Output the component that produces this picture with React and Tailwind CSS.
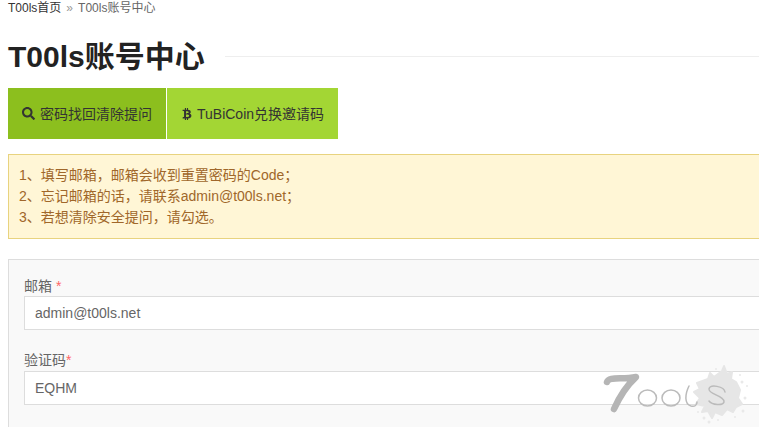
import { FaSearch, FaBtc } from "react-icons/fa";

function Watermark() {
  return (
    <svg className="absolute left-[600px] top-[362px]" width="159" height="65" viewBox="0 0 159 65" fill="none">
      {/* ink splat behind the last letters */}
      <path
        d="M97 21 L108 17 L110 11 L114 15 L122 9 L124 4 L127 12 L132 10 L131 17 L136 20 L140 28 L138 36 L142 42 L136 45 L133 50 L127 47 L122 53 L115 50 L112 56 L108 49 L102 50 L105 44 L96 42 L100 36 L94 30 L100 27 Z"
        fill="#e6e6e6"
        stroke="#e6e6e6"
        strokeWidth="2"
        strokeLinejoin="round"
      />
      <g fill="#e9e9e9">
        <circle cx="142" cy="20" r="1.5" />
        <circle cx="147" cy="24" r="1" />
        <circle cx="140" cy="13" r="1" />
        <circle cx="145" cy="36" r="1.5" />
        <circle cx="143" cy="49" r="1.5" />
        <circle cx="135" cy="55" r="1" />
        <circle cx="104" cy="56" r="1.5" />
        <circle cx="109" cy="60" r="1.5" />
        <circle cx="118" cy="58" r="1" />
        <circle cx="98" cy="50" r="1" />
        <circle cx="116" cy="7" r="1" />
      </g>
      <path d="M7 20 C9 14 22 18 36 15 C25 25 19 36 14 47" stroke="#b5b5b5" strokeWidth="6.5" strokeLinecap="round" strokeLinejoin="round" />
      <g stroke="#bbb" strokeWidth="1.5" strokeLinecap="round">
        <ellipse cx="47.5" cy="36" rx="9" ry="8" />
        <ellipse cx="71" cy="36" rx="9" ry="8" />
        <path d="M89 24 C85 32 84 42 91 44 C95 45 97 43 97 40" />
        <path d="M125 30 C124 24 110 22 109 27 C108 32 125 34 124 40 C123 44 112 43 109 39" />
      </g>
    </svg>
  );
}

export default function App() {
  return (
    <div className="relative h-[427px] w-[759px] overflow-hidden bg-white font-['Liberation_Sans','Noto_Sans_CJK_SC',sans-serif]">
      <div className="w-[1000px] px-2">
        <div className="flex h-[15px] items-center gap-[5px] text-xs leading-none">
          <span className="text-[#333]">T00ls首页</span>
          <span className="text-[#999]">»</span>
          <span className="text-[#666]">T00ls账号中心</span>
        </div>

        <div className="mt-[22px] flex h-[39px] items-center gap-5">
          <h1 className="text-[30px] font-bold leading-none text-[#222]">T00ls账号中心</h1>
          <div className="h-px flex-1 bg-[#eee]" />
        </div>

        <div className="mt-[12px] flex gap-px">
          <button className="flex h-[51px] w-[158px] items-center justify-center gap-[5px] bg-[#8cbf1e] text-sm text-[#333]">
            <FaSearch size={13} />
            密码找回清除提问
          </button>
          <button className="flex h-[51px] w-[171px] items-center justify-center gap-1 bg-[#a3d634] text-sm text-[#333]">
            <FaBtc size={12} />
            TuBiCoin兑换邀请码
          </button>
        </div>

        <div className="mt-[15px] h-[85px] border border-[#e8d37f] bg-[#fff6d6] px-[10px] py-[10px] text-sm leading-[21px] text-[#a0672a]">
          <p>1、填写邮箱，邮箱会收到重置密码的Code；</p>
          <p>2、忘记邮箱的话，请联系admin@t00ls.net；</p>
          <p>3、若想清除安全提问，请勾选。</p>
        </div>

        <div className="mt-5 h-[200px] border border-[#ddd] bg-[#f9f9f9] px-[15px] pt-[16px] text-sm text-[#666]">
          <label className="block h-[20px] leading-[20px]">
            邮箱 <span className="text-[#f66]">*</span>
          </label>
          <input
            readOnly
            value="admin@t00ls.net"
            className="block h-[34px] w-full border border-[#ddd] bg-white px-[10px] text-sm text-[#666] outline-none"
          />
          <label className="mt-[20px] block h-[21px] leading-[21px]">
            验证码<span className="text-[#f66]">*</span>
          </label>
          <input
            readOnly
            value="EQHM"
            className="block h-[34px] w-full border border-[#ddd] bg-white px-[10px] text-sm text-[#666] outline-none"
          />
        </div>
      </div>
      <Watermark />
    </div>
  );
}
